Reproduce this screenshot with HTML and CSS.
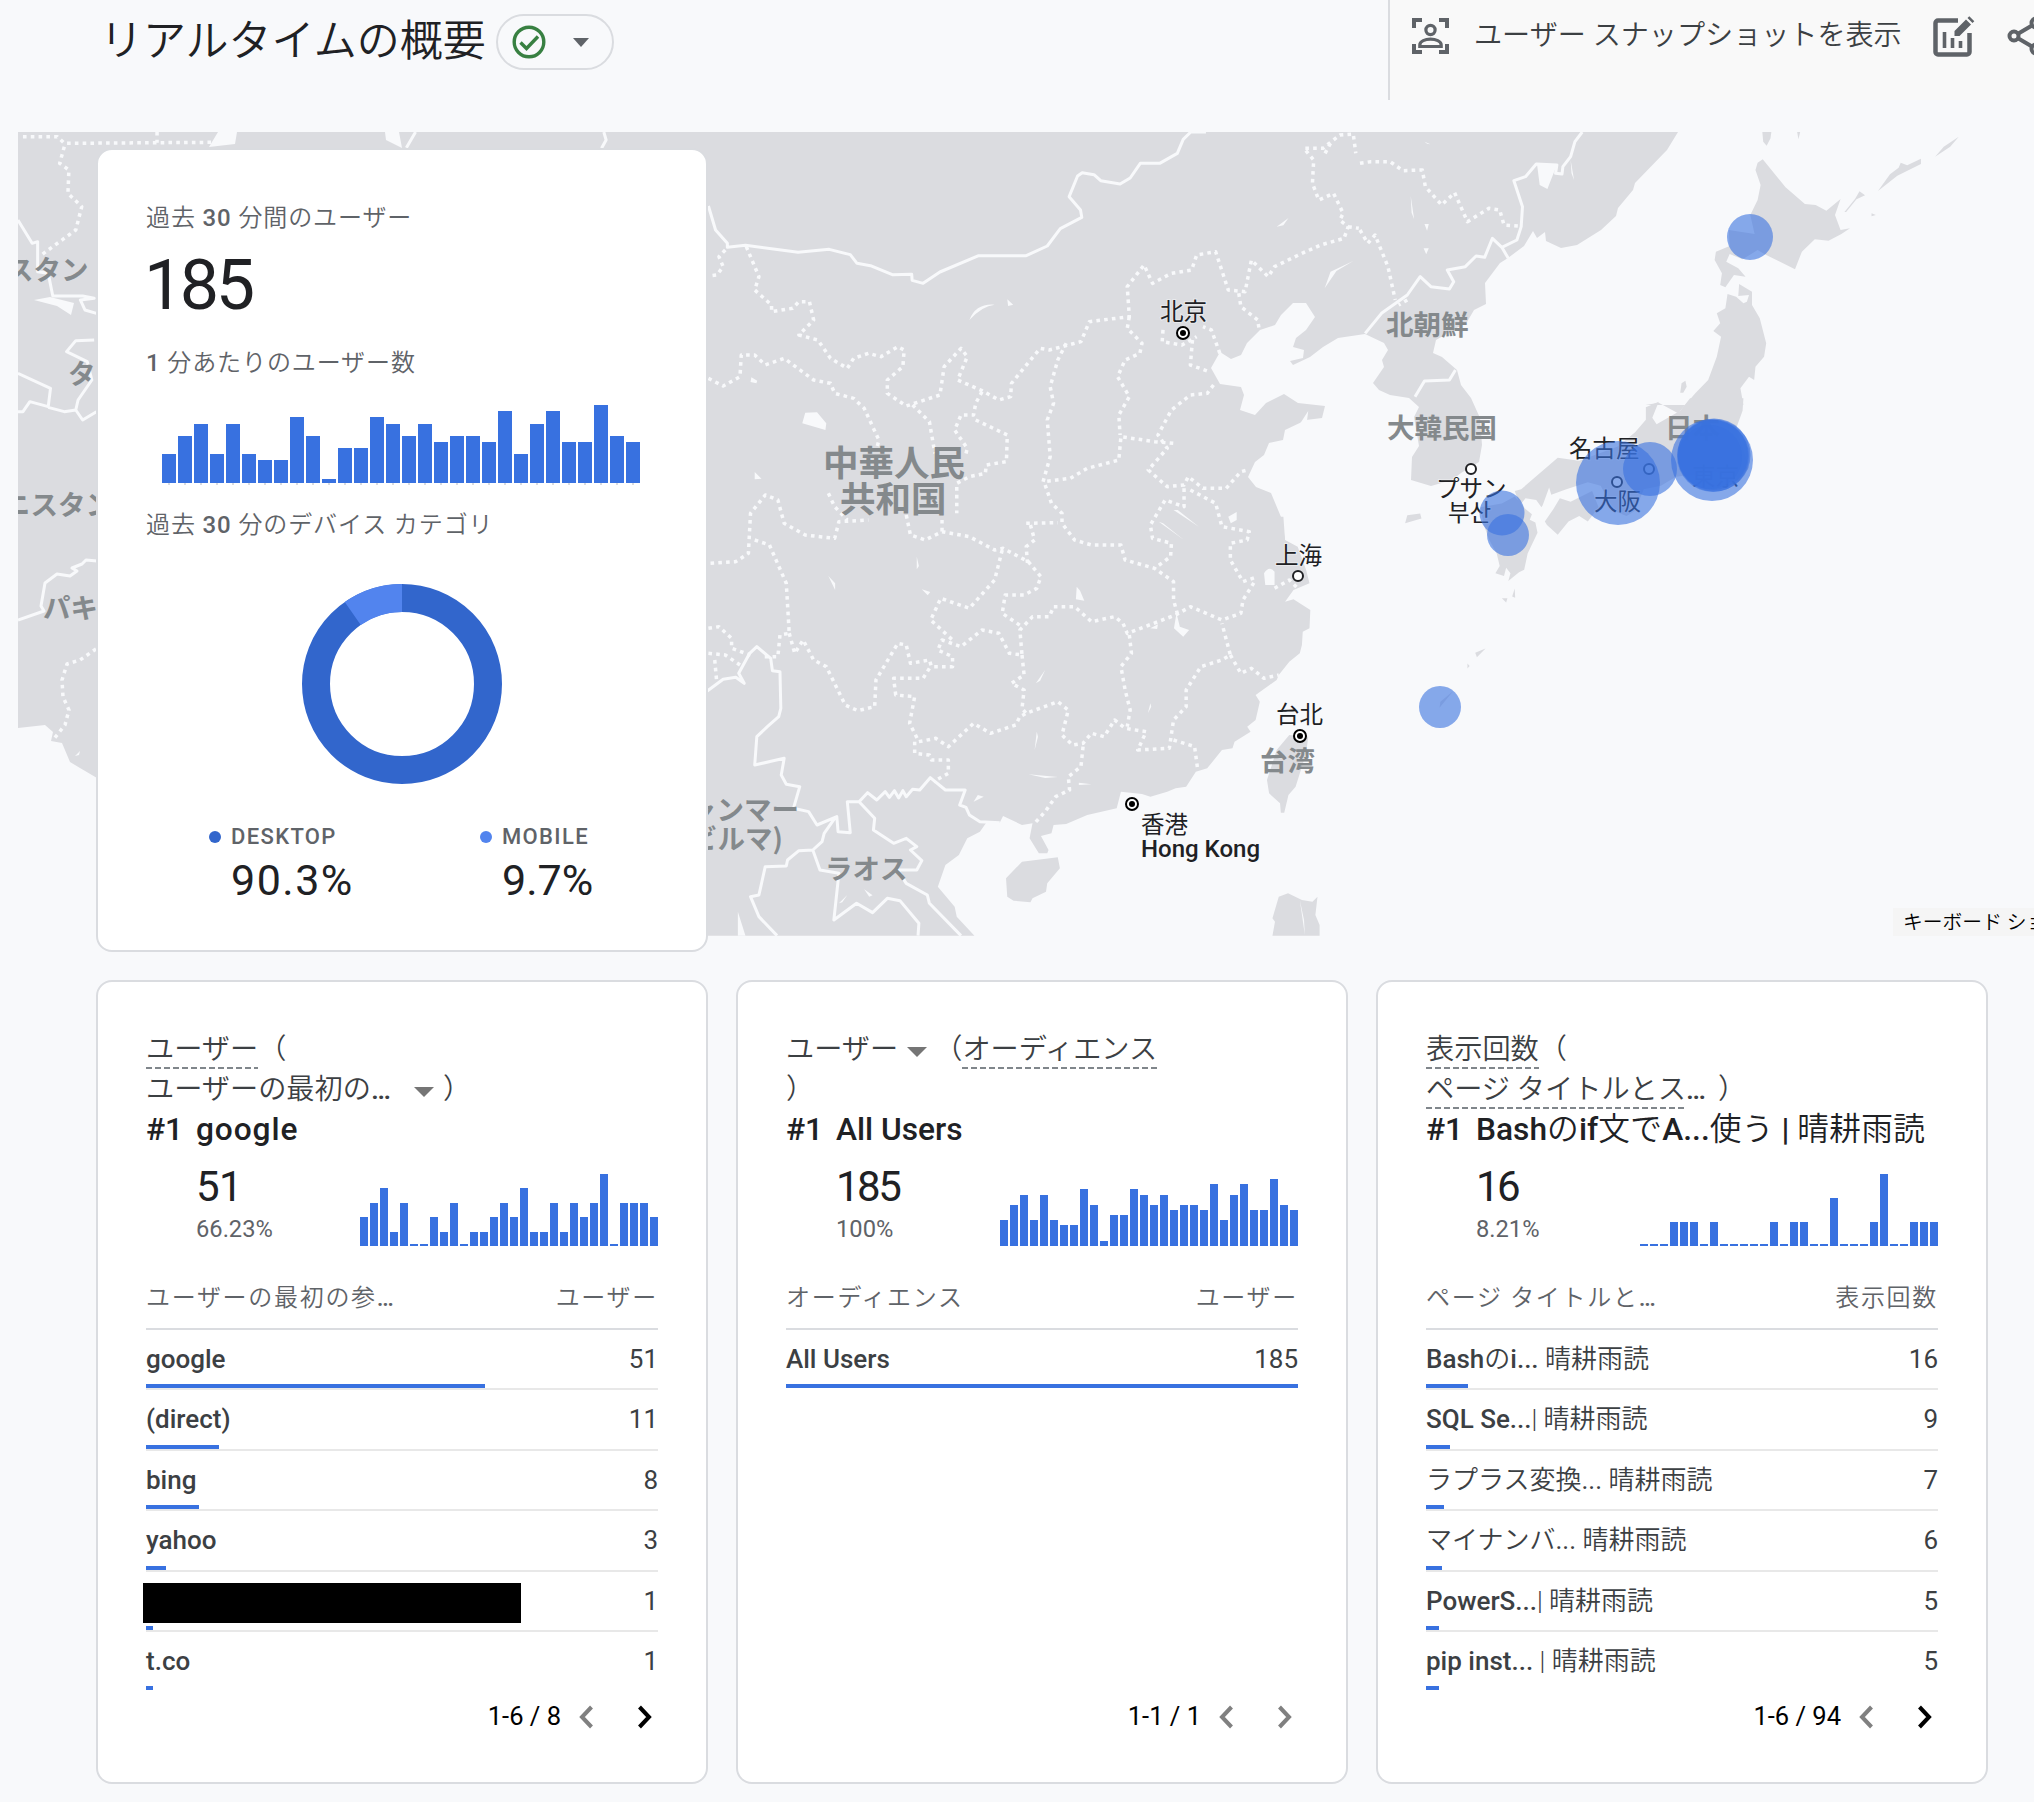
FILE: index.html
```html
<!DOCTYPE html>
<html lang="ja">
<head>
<meta charset="utf-8">
<title>リアルタイムの概要</title>
<link rel="stylesheet" href="styles.css">
</head>
<body>
<header class="topbar">
  <h1 class="title">リアルタイムの概要</h1>
  <div class="status">
    <svg class="status-check" viewBox="0 0 34 34"><circle cx="17" cy="17" r="14.8"/><path d="M8.5 17.5l6 6L26 11.500"/></svg>
    <svg class="caret" viewBox="0 0 16 9"><path d="M0 0h16L8 9z"/></svg>
  </div>
  <div class="actions">
    <svg class="ic-snap" viewBox="0 0 37 36"><path class="thick" d="M2 10V2h8M27 2h8v8M35 26v8h-8M10 34H2v-8"/><circle cx="18.500" cy="12" r="4.600"/><path d="M7.800 28.500v-1.500c0-4 5.500-5.800 10.700-5.800s10.700 1.800 10.700 5.800v1.500z"/></svg>
    <span class="actions-label">ユーザー スナップショットを表示</span>
    <svg class="ic-edit" viewBox="0 0 41 41"><path class="frame" d="M25 4.500H5a2.500 2.500 0 0 0-2.500 2.500v29A2.500 2.500 0 0 0 5 38.500h29a2.500 2.500 0 0 0 2.500-2.500V17"/><path class="cols" d="M11.500 16v16M19.500 22v10M27.500 25v7"/><path class="pen" d="M21.500 20v-5L33 3.500l5 5L26.500 20zM34.500 2l1.800-1.800 5 5L39.500 7z"/></svg>
    <svg class="ic-share" viewBox="0 0 44 44"><circle cx="11" cy="22" r="4.500"/><circle cx="33" cy="9" r="4.500"/><circle cx="33" cy="35" r="4.500"/><path d="M15 19.700l14-8.200M15 24.300l14 8.200"/></svg>
  </div>
</header>

<section class="hero">
  <svg class="map" viewBox="18 132 2016 804">
    <g class="land">
      <path d="M18 132H1678L1667 150 1635 183 1633 190 1618 208 1616 216 1601 230 1577 245 1561 248 1546 241 1545 232 1537 238 1533 231 1524 246 1508 258 1500 263 1485 283 1486 304 1474 310 1467 322 1436 340 1433 353 1442 357 1457 370 1461 385 1471 398 1480 418 1482 445 1479 462 1461 473 1452 480 1431 486 1411 480 1412 457 1419 446 1414 417 1419 407 1409 398 1390 395 1379 390 1373 383 1384 367 1382 360 1388 350 1384 343 1365 334 1338 338 1323 347 1310 357 1293 365 1290 361 1303 358 1304 350 1293 347 1296 338 1306 330 1315 317 1306 303 1293 303 1281 315 1275 325 1260 330 1247 343 1241 355 1231 359 1220 352 1211 368 1220 384 1241 387 1244 395 1240 410 1255 415 1266 403 1284 394 1298 403 1325 406 1322 418 1306 420 1285 430 1283 440 1269 443 1264 455 1255 462 1248 477 1256 487 1271 493 1281 517 1286 545H600V720H97V778L80 768 70 762 62 743 51 741 53 732 45 725 18 728z"/>
      <path class="lake" d="M218 132h19l-2 12-26 3zM385 132h14l3 16-16-8zM34 300l16-3 24 6-3 12-14-9zM75 756l5-5-1 4z"/>
      <g transform="translate(700 120) scale(.42092 .33333)">
        <path d="M0 1190H1386L1390 1260 1420 1280 1440 1350 1448 1390 1410 1410 1390 1445 1410 1438 1450 1470 1448 1525 1432 1535 1430 1575 1425 1600 1400 1625 1375 1665 1370 1680 1320 1725 1330 1745 1320 1800 1300 1820 1308 1835 1270 1865 1265 1885 1240 1890 1205 1945 1178 1955 1155 2000 1130 2005 1110 2015 1070 2030 1050 2022 1000 2015 990 2065 920 2085 870 2112 840 2115 835 2140 810 2148 828 2190 825 2200 805 2200 783 2155 790 2110 765 2115 720 2088 712 2108 680 2108 665 2135 635 2155 615 2205 583 2235 565 2300 605 2360 610 2390 652 2447H0z"/>
        <path d="M727 2275L765 2225 850 2212 855 2245 825 2290 822 2315 790 2335 785 2347 745 2342 730 2330zM1400 1845L1445 1850 1440 1900 1415 2000 1398 2025 1388 2078 1380 2078 1378 2050 1352 2020 1347 1980 1370 1890zM1375 2330L1397 2320 1430 2340 1455 2345 1467 2330 1462 2385 1472 2415V2447H1360L1366 2405 1360 2395z"/>
        <path class="lake" d="M250 878L278 877 300 910 298 930 243 910zM1340 1360q12-25 25-5v40h-22zM1132 1480l8 40 22 10-14 20-22-25zM1070 1525l18-12-2 14zM1255 1190l20-14v24l-14 10zM122 772l14 10-2 8-14-4zM130 1056l16 20-16 2zM305 1368l16 22v20zM1445 873l-3 30-25 25zM820 1650l-22 40 10-8zM895 1400l8 12 10 30-20-4zM730 538l14 16-12 4zM900 1988l30 5-30 2zM780 1963l70 8-30 3zM90 2375l18 72h-18zM1425 2340l10 60 2 45zM800 1835l-5 55 8-40zM1070 1750l-6 30 8-20zM390 2308l20 18-8 4zM350 2325l-20 25 8-3zM660 2025l-10 20 24-15zM527 1408l20 8-6 10zM515 1310v38l5-10zM640 600q15-50 60-46-30 4-60 46zM1090 1205l60 55-50-50zM1125 1170l60 50-50-50zM1370 320l28-26-12 22zM1484 505l14-50 54-32-40 30z"/>
      </g>
      <g transform="translate(1360 0) scale(.42985 .33333)">
        <path d="M937 478L990 562 1035 612 1060 615 1085 632 1118 597 1105 645 1118 690 1140 685 1120 702 1090 722 1058 718 1028 755 1012 808 945 765 925 750 890 778 860 762 852 785 880 805 897 830 870 825 850 862 838 855 842 820 825 780 828 755 860 738 858 690 918 702 908 645 925 600 932 555 920 510 925 488z"/>
        <path d="M855 882L875 890 892 910 900 905 905 885 880 888 882 852 912 875 912 915 930 955 945 1030 940 1070 920 1100 917 1140 905 1130 885 1165 892 1215H664L695 1208 740 1240 780 1180 810 1140 830 1070 840 1010 822 993 838 970 830 940 850 925zM745 1178l3-28 9-8 3 18-8 18zM936 396h21l-2 19-9 22-8-12zM1017 396h7l-4 22zM1338 470l20-30 35-30-20 30zM1205 573l28-50 20-20 5-15 15 8 32-20v16l-55 35zM1127 636l25-40 10-22 13 12-20 12-24 38zM1190 640l10 5-10 4z"/>
        <path class="lake" d="M412 494L458 494 436 567 418 555zM118 588l8 70-6-20zM150 425l14 8-8-2zM148 745l12 0-6 18zM150 672l10 0-4 20zM490 480l8 60-6-20z"/>
      </g>
      <g transform="translate(1360 400) scale(.42985 .35714)">
        <path d="M892 -5L890 30 875 80 905 190 880 230 830 200 735 215 700 240 660 250 640 310 620 325 590 310 560 240 530 230 480 250 445 265 440 245 425 295 422 300 410 280 385 275 372 295 360 255 375 250 460 162 510 170 600 130 640 90 665 55V20L695 5 680 50 690 68 745 30 768 -5z"/>
        <path d="M280 300L330 290 360 270 385 305 400 320 395 335 408 343 413 372 390 430 382 475 370 482 345 507 350 485 340 470 335 493 315 485 325 465 318 430 300 390 288 350zM430 340L450 305 465 275 490 285 540 255 555 300 530 340 510 325 485 340 460 377 435 350zM105 345l5-22 30-5 3 14zM330 555h13l-3 12zM360 528l1 26-7-4zM268 708l24-12-20 24zM250 738l5 7-5 7zM187 845l30-30-32 47z"/>
      </g>
    </g>

    <g class="borders">
      <path d="M18 620L44 611 41 606 45 583 57 574 70 576 77 571 72 568 82 564 86 560 97 561"/>
      <path class="dots" d="M96 649L80 660 67 664 62 680 63 697 69 710 65 725 53 740"/>
      <g transform="scale(.45918 .33333)">
        <path d="M39 660L70 730 82 725 82 815 105 820 115 888 180 888 205 895 175 900 185 930 210 940M39 1120L110 1165 105 1220 65 1205 50 1235 39 1235M105 1222L140 1235 165 1230 180 1260 210 1235M205 1020L165 1022 145 1055 190 1085 200 1140 170 1200 165 1230M905 396L885 443M1315 396L1320 420 1310 445"/>
        <path class="dots" d="M50 410L125 410 140 430 460 427M342 396V428M140 440L130 490 150 510 148 580 178 620 165 690 90 765"/>
      </g>
      <g transform="translate(700 120) scale(.42092 .33333)">
        <path d="M20 258L37 330 65 370 65 382 108 376 233 397 307 388 357 404 373 430 405 437 457 464 503 463 504 481 530 490 570 456 662 407 775 407 825 378 856 326 907 292 904 270 877 230 897 168 908 158 936 164 952 182 998 192 1022 174 1046 130 1092 130 1134 100 1148 58 1166 36H1202"/>
        <path d="M10 1720L55 1678 85 1672 105 1690 92 1660 118 1600 135 1580 168 1615 172 1652 190 1655 192 1765 187 1790 160 1820 135 1850 130 1935 200 1915 193 1965 205 1993 237 2000 222 2065 258 2075 278 2115 325 2090 328 2135 357 2138 350 2045 378 2045 398 2018 420 2040 440 2015 450 2032 462 2012 472 2034 482 2012 490 2030 505 2008 522 2010 547 1973 583 2010 630 2010 617 2055 632 2062 640 2085 665 2105 712 2108M378 2045L415 2095 412 2130 460 2170 490 2155 515 2180 500 2190 527 2222 515 2250 470 2250 490 2290 540 2325 545 2350 620 2447M320 2095L295 2140 290 2165 268 2190 235 2192 208 2220 205 2238 155 2240 140 2325 120 2330 140 2390 183 2447M268 2190L285 2250 330 2260 318 2400 372 2350 410 2378 445 2335 475 2342 520 2410 518 2447"/>
        <g class="dots">
          <path d="M60 390L45 410 55 440 40 465 20 468M110 380L140 470 130 510 170 555 170 575 220 565 235 545 260 545 270 600 235 645 280 660 310 715 350 745 365 715 400 700 430 710 470 680 485 690 482 740 445 780 445 820 490 858 570 825 580 740 620 685 635 710 612 780 670 812 710 840 738 830 740 790 808 685 830 690 905 665 925 605 1020 590 1015 500 1055 435 1075 490 1120 460 1168 450 1180 405 1225 395 1255 510 1295 515 1310 420 1350 470 1365 440 1430 400 1475 375 1530 355 1540 320 1520 300 1528 280 1505 220 1470 240 1455 190 1458 120 1435 85 1480 85 1520 45 1552 42 1558 100M1485 100L1500 65M1540 320L1565 325M20 775L55 798 95 770 98 705 130 705 155 735 200 715 270 780 310 790 320 820 365 835 390 865 425 960 420 985M505 855L545 905 558 1000M670 815L655 850 650 885 620 885 605 930 635 985 630 1010M655 900L730 945 728 1025 680 1035 678 1060 640 1070 610 1090 610 1180"/>
          <path d="M870 670L850 720 832 800 840 850 825 900 832 1010 815 1085 880 1075 920 1045 995 1020 1000 950 1080 965 1125 970M1020 590L1015 625 1050 670 1045 700 1010 720 992 770 1020 830 995 885 998 945M1235 700L1215 630 1195 620M1170 660L1165 735 1210 755M1220 795L1205 820 1165 825 1120 870 1088 945 1110 985 1065 1050 1110 1100 1150 1095 1160 1070 1195 1105 1250 1105 1285 1055 1300 1050M1100 630L1098 665 1145 675 1180 650M1280 520L1285 560 1325 600 1328 625M1150 1105L1150 1160 1105 1140 1070 1215 1075 1255 1120 1270 1118 1310 1080 1345M1165 1110L1225 1150 1240 1220 1305 1235 1300 1260 1260 1270 1260 1320 1290 1385 1325 1370M820 1095L835 1150 860 1180 860 1210 890 1260 930 1275 1000 1275 1010 1320 1080 1345 1125 1385 1125 1440 1135 1485M775 1210L850 1208M785 1215L795 1260 775 1280 778 1330M25 1330L85 1325 115 1300 120 1180 155 1125 185 1140 200 1210 250 1245 320 1255 330 1205 400 1200M130 1260L165 1275 205 1390 212 1540 190 1545 185 1610 150 1610M305 1120L320 1160 350 1200M490 1185L500 1245 535 1260 575 1235 640 1250 700 1290 720 1285 780 1325 810 1370 800 1405 770 1425 725 1425 718 1480 765 1520M575 1200V1240M718 1290L700 1380 640 1465 572 1435 548 1500 600 1560"/>
          <path d="M212 1540L225 1600 245 1560 270 1620 300 1640 345 1755 375 1772 415 1760 418 1680 470 1570 490 1575 500 1630 545 1620 550 1640 600 1640 600 1610 565 1590 575 1560 620 1580 670 1530 710 1540 735 1600 765 1605 760 1530 790 1490 830 1490 840 1460 890 1460 930 1505 985 1490 1005 1510 1015 1540 1130 1485 1165 1460 1240 1500 1285 1480 1290 1440 1320 1380M545 1645L530 1675 460 1675 465 1725 510 1730 498 1810 520 1865 560 1855 590 1880 650 1810 690 1840 750 1815 760 1790 775 1780 850 1745 875 1770 860 1845 885 1875 910 1870 930 1840 960 1850 985 1800 1010 1825 1060 1835 1040 1890 1115 1885 1125 1800 1155 1760 1155 1710 1190 1640 1240 1620 1260 1605 1240 1510M765 1605L770 1665 740 1690 770 1710 765 1765 775 1780M1020 1545L1025 1600 1000 1640 1010 1710 1022 1770 1015 1820M1260 1605L1285 1660 1310 1645 1340 1675 1375 1665M1125 1860L1175 1880 1182 1945M910 1880L905 1940 875 1970 878 2010 845 2030 820 2075 795 2110M510 1865V1900L545 1905 550 1920 590 1920 590 1960 555 1985M20 1525L45 1520 75 1555 75 1585 120 1605M20 1600L60 1605 95 1635M35 1620L40 1690M1365 1405L1400 1380 1420 1405"/>
        </g>
      </g>
      <g transform="translate(1360 0) scale(.42985 .33333)">
        <path d="M517 396L500 425 490 470 472 500 470 522 455 520 458 495 410 492 385 530 358 542 378 620 375 680 365 720 330 742 345 775M330 742L308 715 290 772 270 768 245 800 203 810 218 845 208 867 165 860 140 830 110 885 50 940 12 1000M128 1190L150 1143 208 1140 222 1110"/>
        <path class="dots" d="M0 490L25 485 70 485 100 512 145 510 152 560 190 615 220 578 250 665 300 625 325 630 335 675 368 678M0 690L18 730 35 705 65 800 82 900M110 900L90 915"/>
      </g>
    </g>

    <g class="country">
      <text x="6" y="280">スタン</text><text x="68" y="384">タ</text><text x="3" y="515">ニスタン</text><text x="43" y="618">パキ</text>
      <g class="country-big"><text x="823" y="476">中華人民</text><text x="840" y="512">共和国</text></g>
      <text x="1386" y="335">北朝鮮</text><text x="1387" y="438">大韓民国</text><text x="1665" y="438">日本</text>
      <text x="1260" y="771">台湾</text><text x="825" y="879">ラオス</text>
      <text x="799" y="820" text-anchor="end">ャンマー</text><text x="783" y="849" text-anchor="end">ビルマ)</text>
    </g>
    <g class="city">
      <text x="1160" y="320">北京</text><text x="1275" y="564">上海</text><text x="1276" y="723">台北</text>
      <text x="1141" y="833">香港</text><text class="latin" x="1141" y="857">Hong Kong</text>
      <text x="1569" y="457">名古屋</text><text x="1594" y="510">大阪</text><text x="1692" y="485">東京</text>
      <text x="1436" y="497">プサン</text><text class="kr" x="1448" y="521">부산</text>
    </g>
    <g class="marks"><circle cx="1471" cy="469" r="5"/><circle cx="1649" cy="469" r="5"/><circle cx="1617" cy="482" r="5"/><circle cx="1298" cy="576" r="5"/></g>
    <g class="capitals"><circle cx="1183" cy="333" r="6"/><circle cx="1300" cy="736" r="6"/><circle cx="1132" cy="804" r="6"/></g>
    <g class="capital-dots"><circle cx="1183" cy="333" r="3"/><circle cx="1300" cy="736" r="3"/><circle cx="1132" cy="804" r="3"/></g>
    <g class="bubbles">
      <circle cx="1750" cy="237" r="23"/><circle cx="1502" cy="513" r="22.500"/><circle cx="1508" cy="535" r="21"/>
      <circle cx="1618" cy="483" r="42"/><circle cx="1650" cy="469" r="27"/><circle cx="1440" cy="707" r="21"/>
      <circle cx="1712" cy="460" r="41"/><circle cx="1714" cy="455" r="36.500"/><circle cx="1713" cy="456" r="36"/><circle cx="1713" cy="455" r="35"/><circle cx="1710" cy="457" r="32"/>
    </g>
  </svg>
  <div class="keyboard">キーボード ショートカット</div>

  <article class="card summary">
    <p class="label">過去 <b>30</b> 分間のユーザー</p>
    <p class="big">185</p>
    <p class="label"><b>1</b> 分あたりのユーザー数</p>
    <svg class="minutes" viewBox="0 0 478 80">
      <path class="ticks" d="M6 79h480"/>
      <path class="bars" d="M7 78v-29m16 29v-47m16 47v-59m16 59v-29m16 29v-59m16 59v-29m16 29v-23m16 23v-23m16 23v-66m16 66v-47m16 47v-4m16 4v-35m16 35v-35m16 35v-66m16 66v-59m16 59v-47m16 47v-59m16 59v-41m16 41v-47m16 47v-47m16 47v-41m16 41v-72m16 72v-29m16 29v-59m16 59v-72m16 72v-41m16 41v-41m16 41v-78m16 78v-47m16 47v-41"/>
    </svg>
    <p class="label">過去 <b>30</b> 分のデバイス カテゴリ</p>
    <svg class="donut" viewBox="0 0 200 200"><circle class="desktop" cx="100" cy="100" r="86"/><circle class="mobile" cx="100" cy="100" r="86" pathLength="100"/></svg>
    <div class="legend">
      <div class="device"><i class="dot dot-desktop"></i><span>DESKTOP</span><strong class="wide">90.3%</strong></div>
      <div class="device"><i class="dot dot-mobile"></i><span>MOBILE</span><strong>9.7%</strong></div>
    </div>
  </article>
</section>

<main class="cards">
  <article class="card">
    <h2 class="heading"><span class="dashed">ユーザー</span>（<br>ユーザーの最初の<b>…</b><svg class="drop drop-wide" viewBox="0 0 20 10"><path d="M0 0h20L10 10z"/></svg>）</h2>
    <p class="rank"><span class="rank-no">#1</span><span class="roomy">google</span></p>
    <div class="stats">
      <div class="figures"><span class="value">51</span><span class="percent">66.23%</span></div>
      <svg class="spark" viewBox="0 0 298 72"><path d="M4 72v-29m10 29v-43m10 43v-58m10 58v-14m10 14v-43m10 43v-2m10 2v-2m10 2v-29m10 29v-14m10 14v-43m10 43v-2m10 2v-14m10 14v-14m10 14v-29m10 29v-43m10 43v-29m10 29v-58m10 58v-14m10 14v-14m10 14v-43m10 43v-14m10 14v-43m10 43v-29m10 29v-43m10 43v-72m10 72v-2m10 2v-43m10 43v-43m10 43v-43m10 43v-29"/></svg>
    </div>
    <div class="thead"><span>ユーザーの最初の参<b>…</b></span><span>ユーザー</span></div>
    <ul class="rows">
      <li><span class="name">google</span><span class="num">51</span><i class="bar" style="width:66.23%"></i></li>
      <li><span class="name">(direct)</span><span class="num">11</span><i class="bar" style="width:14.29%"></i></li>
      <li><span class="name">bing</span><span class="num">8</span><i class="bar" style="width:10.39%"></i></li>
      <li><span class="name">yahoo</span><span class="num">3</span><i class="bar" style="width:3.9%"></i></li>
      <li><span class="name"><i class="redacted"></i></span><span class="num">1</span><i class="bar" style="width:1.3%"></i></li>
      <li><span class="name">t.co</span><span class="num">1</span><i class="bar" style="width:1.3%"></i></li>
    </ul>
    <div class="pager"><span>1-6 / 8</span><svg class="chev off" viewBox="0 0 15 24"><path d="M12.500 2L3 12l9.500 10"/></svg><svg class="chev" viewBox="0 0 15 24"><path d="M2.500 2L12 12 2.500 22"/></svg></div>
  </article>

  <article class="card">
    <h2 class="heading">ユーザー<svg class="drop" viewBox="0 0 20 10"><path d="M0 0h20L10 10z"/></svg>（<span class="dashed">オーディエンス</span><br>）</h2>
    <p class="rank"><span class="rank-no">#1</span>All Users</p>
    <div class="stats">
      <div class="figures"><span class="value tight">185</span><span class="percent">100%</span></div>
      <svg class="spark" viewBox="0 0 298 72"><path d="M4 72v-26m10 26v-41m10 41v-51m10 51v-26m10 26v-51m10 51v-26m10 26v-21m10 21v-21m10 21v-57m10 57v-41m10 41v-5m10 5v-31m10 31v-31m10 31v-57m10 57v-51m10 51v-41m10 41v-51m10 51v-36m10 36v-41m10 41v-41m10 41v-36m10 36v-62m10 62v-26m10 26v-51m10 51v-62m10 62v-36m10 36v-36m10 36v-67m10 67v-41m10 41v-36"/></svg>
    </div>
    <div class="thead"><span>オーディエンス</span><span>ユーザー</span></div>
    <ul class="rows">
      <li><span class="name">All Users</span><span class="num">185</span><i class="bar" style="width:100%"></i></li>
    </ul>
    <div class="pager"><span>1-1 / 1</span><svg class="chev off" viewBox="0 0 15 24"><path d="M12.500 2L3 12l9.500 10"/></svg><svg class="chev off" viewBox="0 0 15 24"><path d="M2.500 2L12 12 2.500 22"/></svg></div>
  </article>

  <article class="card">
    <h2 class="heading"><span class="dashed">表示回数</span>（<br><span class="dashed">ページ タイトルとス</span><b>…</b><span class="close">）</span></h2>
    <p class="rank"><span class="rank-no">#1</span>Bash<span class="jp">の</span>if<span class="jp">文で</span>A...<span class="jp">使う</span> | <span class="jp">晴耕雨読</span></p>
    <div class="stats">
      <div class="figures"><span class="value tight">16</span><span class="percent">8.21%</span></div>
      <svg class="spark" viewBox="0 0 298 72"><path d="M4 72v-2m10 2v-2m10 2v-2m10 2v-24m10 24v-24m10 24v-24m10 24v-2m10 2v-24m10 24v-2m10 2v-2m10 2v-2m10 2v-2m10 2v-2m10 2v-24m10 24v-2m10 2v-24m10 24v-24m10 24v-2m10 2v-2m10 2v-48m10 48v-2m10 2v-2m10 2v-2m10 2v-24m10 24v-72m10 72v-2m10 2v-2m10 2v-24m10 24v-24m10 24v-24"/></svg>
    </div>
    <div class="thead"><span>ページ タイトルと<b>…</b></span><span>表示回数</span></div>
    <ul class="rows">
      <li><span class="name">Bash<span class="jp">の</span>i... <span class="jp">晴耕雨読</span></span><span class="num">16</span><i class="bar" style="width:8.21%"></i></li>
      <li><span class="name">SQL Se...<span class="jp">| 晴耕雨読</span></span><span class="num">9</span><i class="bar" style="width:4.62%"></i></li>
      <li><span class="name"><span class="jp">ラプラス変換<span class="mid">...</span> 晴耕雨読</span></span><span class="num">7</span><i class="bar" style="width:3.59%"></i></li>
      <li><span class="name"><span class="jp">マイナンバ<span class="mid">...</span> 晴耕雨読</span></span><span class="num">6</span><i class="bar" style="width:3.08%"></i></li>
      <li><span class="name">PowerS...<span class="jp">| 晴耕雨読</span></span><span class="num">5</span><i class="bar" style="width:2.56%"></i></li>
      <li><span class="name">pip inst... <span class="jp">| 晴耕雨読</span></span><span class="num">5</span><i class="bar" style="width:2.56%"></i></li>
    </ul>
    <div class="pager"><span>1-6 / 94</span><svg class="chev off" viewBox="0 0 15 24"><path d="M12.500 2L3 12l9.500 10"/></svg><svg class="chev" viewBox="0 0 15 24"><path d="M2.500 2L12 12 2.500 22"/></svg></div>
  </article>
</main>
</body>
</html>
```
FILE: styles.css
```css
* { box-sizing: border-box; }
body {
  margin: 0;
  width: 2034px;
  height: 1802px;
  overflow: hidden;
  background: #f8f9fb;
  color: #202124;
  font-family: Roboto, "Noto Sans CJK JP", sans-serif;
}
svg { display: block; flex: none; }
p, h1, h2, ul { margin: 0; padding: 0; font-weight: 400; }

/* Top bar */
.topbar { display: flex; align-items: flex-start; height: 132px; padding-left: 100px; }
.title { width: 396px; font-size: 43px; line-height: 83px; font-weight: 350; white-space: nowrap; }
.status {
  display: flex; align-items: center; gap: 27px;
  width: 118px; height: 56px; margin-top: 14px; padding-left: 14px;
  border: 2px solid #dadce0; border-radius: 28px;
}
.status-check { width: 34px; height: 34px; fill: none; stroke: #388042; stroke-width: 3.400; }
.caret { width: 16px; height: 9px; fill: #5f6368; }
.actions {
  display: flex; align-items: flex-start;
  width: 646px; height: 100px; margin-left: auto;
  border-left: 2px solid #dadce0; background: #f9f9f9; overflow: hidden;
}
.actions svg { fill: none; stroke: #5f6368; stroke-width: 3.200; }
.actions .ic-snap { width: 37px; height: 36px; margin: 18px 0 0 22px; }
.actions .thick { stroke-width: 4; }
.actions-label { flex: none; width: 458px; margin-left: 25px; font-size: 28.100px; line-height: 71px; font-weight: 350; color: #3c4043; white-space: nowrap; }
.actions .ic-edit { width: 41px; height: 41px; margin: 16px 0 0 1px; overflow: visible; }
.actions .frame { stroke-width: 4.500; }
.actions .cols { stroke-width: 3.600; }
.actions .pen { fill: #5f6368; stroke: none; }
.actions .ic-share { width: 44px; height: 44px; margin: 14px 0 0 29px; stroke-width: 4; }

/* Map */
.hero { display: grid; grid-template-columns: 2034px; grid-template-rows: 804px 16px; }
.map { grid-area: 1 / 1; width: 2016px; height: 804px; margin-left: 18px; }
.land { fill: #dbdce0; }
.land .lake { fill: #f8f9fb; }
.borders { fill: none; stroke: #f8f9fb; stroke-linejoin: round; }
.borders path { vector-effect: non-scaling-stroke; stroke-width: 3; }
.borders .dots, .borders .dots path { stroke-width: 3.500; stroke-dasharray: 3.600 4.200; }
.country { fill: #84898c; font: 700 27.500px "Noto Sans CJK JP", sans-serif; }
.country-big { font-size: 35.500px; }
.city { fill: #202124; font: 400 23.500px "Noto Sans CJK JP", sans-serif; stroke: #f8f9fb; stroke-width: 2; paint-order: stroke; stroke-opacity: .5; }
.city .latin { font: 500 24px Roboto, sans-serif; }
.city .kr { font-family: "Noto Sans CJK KR", sans-serif; }
.marks { fill: #fff; stroke: #202124; stroke-width: 2; }
.capitals { fill: #fff; stroke: #000; stroke-width: 2; }
.capital-dots { fill: #000; }
.bubbles { fill: #3871e0; fill-opacity: .6; }
.keyboard {
  grid-area: 1 / 1; align-self: end; justify-self: end;
  width: 141px; height: 28px; padding-left: 10px; overflow: hidden;
  background: #f5f5f5; color: #000; font-size: 19.800px; line-height: 29px; font-weight: 350; white-space: nowrap;
}

/* Cards */
.card { width: 612px; height: 804px; padding: 46px 48px 0; background: #fff; border: 2px solid #dadce0; border-radius: 16px; }
.summary { grid-area: 1 / 1 / 3 / 2; align-self: end; margin-left: 96px; padding-top: 56px; }
.label { font-size: 24px; line-height: 25px; margin-bottom: -1px; letter-spacing: .9px; font-weight: 350; color: #5f6368; white-space: nowrap; }
.label b { font-weight: 500; }
.big { margin: 15px 0 26px -2px; font-size: 70px; line-height: 80px; letter-spacing: -3.500px; }
.minutes { width: 478px; height: 80px; margin: 30px 0 28px 16px; }
.bars { stroke: #3871e0; stroke-width: 14; }
.ticks { stroke: #dadce0; stroke-width: 2; stroke-dasharray: 2 14; }
.donut { width: 200px; height: 200px; margin: 47px auto 41px; fill: none; stroke-width: 28; }
.desktop { stroke: #3266cc; }
.mobile { stroke: #5284ee; stroke-dasharray: 9.700 90.300; stroke-dashoffset: 34.700; }
.legend { display: flex; gap: 104px; padding-left: 63px; }
.device { display: grid; grid-template-columns: 22px 145px; row-gap: 9px; align-items: center; color: #5f6368; font-size: 22px; line-height: 24px; font-weight: 500; letter-spacing: 1.350px; }
.dot { width: 12px; height: 12px; border-radius: 50%; }
.dot-desktop { background: #3266cc; }
.dot-mobile { background: #5284ee; }
.device strong { grid-column: 2; font-size: 43px; line-height: 44px; font-weight: 400; letter-spacing: 0; color: #202124; }
.device .wide { letter-spacing: 1.500px; }

.cards { display: flex; gap: 28px; padding: 28px 0 0 96px; }
.heading { padding-top: 1.500px; margin-bottom: -1.500px; font-size: 28.200px; line-height: 40px; font-weight: 350; color: #3c4043; white-space: nowrap; }
.heading b, .thead b { font-weight: 500; }
.close { margin-left: 12px; }
.dashed { padding-bottom: 3.500px; background: repeating-linear-gradient(90deg, #80868b 0 6px, transparent 6px 9px) left bottom / 100% 2.500px no-repeat; }
.drop { display: inline-block; width: 20px; height: 10px; margin: 0 7px 2px 9px; fill: #757575; }
.drop-wide { margin: 0 9px 2px 23px; }
.rank { font-size: 31.700px; line-height: 44px; font-weight: 500; white-space: nowrap; }
.rank-no { display: inline-block; width: 50px; }
.roomy { letter-spacing: .9px; }
.jp { font-weight: 350; }
.rank .jp { letter-spacing: .3px; }
.stats { display: flex; justify-content: space-between; align-items: flex-end; height: 94px; padding-left: 50px; }
.figures { display: flex; flex-direction: column; height: 87px; }
.value { font-size: 42px; line-height: 55px; margin-bottom: 1px; letter-spacing: -.5px; }
.tight { letter-spacing: -2.500px; }
.percent { font-size: 23.700px; line-height: 28px; color: #5f6368; }
.spark { width: 298px; height: 72px; stroke: #3871e0; stroke-width: 8; }
.thead { display: flex; justify-content: space-between; padding: 38px 0 16px; border-bottom: 2px solid #dadce0; font-size: 24px; line-height: 28px; letter-spacing: 1.700px; font-weight: 350; color: #5f6368; }
.rows { height: 362px; list-style: none; }
.rows li { display: grid; grid-template-columns: 1fr auto; grid-template-rows: 54.400px 4px; height: 60.400px; border-bottom: 2px solid #e8e8e8; font-size: 26px; line-height: 59px; color: #3c4043; white-space: nowrap; }
.rows li:last-child { border-bottom-color: transparent; }
.name { font-weight: 500; }
.mid { font-weight: 450; }
.bar { grid-column: 1 / 3; display: block; height: 4px; background: #3871e0; }
.redacted { display: block; width: 378px; height: 40px; margin: 11px 0 0 -3px; background: #000; }
.pager { display: flex; align-items: center; justify-content: flex-end; height: 48px; padding-right: 6px; font-size: 25.500px; color: #000; }
.chev { width: 15px; height: 24px; margin: 2px 0 0 43px; fill: none; stroke: #000; stroke-width: 4; }
.chev.off { stroke: #808080; }
.pager span + .chev { margin-left: 18px; }
```
